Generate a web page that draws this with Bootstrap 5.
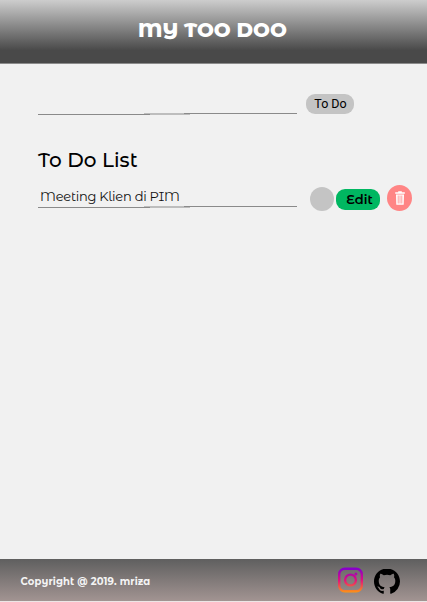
<!DOCTYPE html>
<html lang="en">
<head>
<meta charset="utf-8">
<meta name="viewport" content="width=device-width, initial-scale=1">
<title>My Too Doo</title>
<link rel="stylesheet" href="https://cdn.jsdelivr.net/npm/bootstrap@5.3.0/dist/css/bootstrap.min.css">
<style>
body{background:#f1f1f1;color:#000;font-family:"Montserrat Alternates",Montserrat,Inter,sans-serif;overflow:hidden}
.top-bar{height:64px;background:linear-gradient(#cdcdcd 0,#494949 80%,#494949 100%);border-bottom:1px solid #8b8b8b;padding:0 2px 3px 0}
.top-bar h1{font-size:20px;line-height:24px;font-weight:800}
.field{width:259px;margin-left:38px}
.field input,.field .task{display:block;width:100%;height:20px;padding:0 2px;font-size:13px;line-height:20px;background:none;border:0;outline:0}
.add-row .field{margin-top:-1px}
.field .task{font-weight:400;letter-spacing:-.25px;color:#111}
.field svg{display:block}
.add-row{height:20px;margin-top:30px}
.add-row .btn{width:48px;height:20px;margin-left:9px;background:#c4c4c4;border-radius:9px;font:12.5px/18px Roboto,sans-serif;color:#000;padding:0 0 1px 1px!important}
.list-title{font-size:20px;line-height:24px;margin:34px 0 0 38px;letter-spacing:.07px;font-weight:500}
.task-row{height:26px;margin-top:13px}
.task-row .field{margin-top:-2px}
.check{width:24px;height:24px;background:#c4c4c4;margin:2px 0 0 12.5px}
.task-row .edit{width:44px;height:21px;margin:3px 0 0 2.5px;background:#00b761;border-radius:9px;font-size:13px;line-height:21px;font-weight:600;color:#000;padding:0 0 0 3px!important}
.trash{width:25px;height:26px;margin-left:7px;background:#ff8585}
.foot{height:42px;background:linear-gradient(#5f5f5f,#a29492);padding:0 26px 0 20.5px;color:#f4f4f4}
.foot p{font-size:10px;font-weight:700;line-height:14px;letter-spacing:.12px;padding-top:4px}
.foot-line{height:1px;background:#ece6e6}
</style>
<script src="https://cdn.jsdelivr.net/npm/bootstrap@5.3.0/dist/js/bootstrap.bundle.min.js"></script>
</head>
<body class="d-flex flex-column vh-100">
<header class="top-bar d-flex align-items-center justify-content-center flex-shrink-0">
  <h1 class="m-0 text-white">MY TOO DOO</h1>
</header>
<main class="flex-grow-1">
  <form class="add-row d-flex align-items-start">
    <div class="field flex-shrink-0"><input type="text" aria-label="New task">
      <svg width="259" height="2"><path d="M0 1h112v1H0zM146 0h113v1H146z" fill="#8a8a8a"/><path d="M112 1h40v1h-40zM106 0h40v1h-40z" fill="#8a8a8a" opacity=".5"/></svg></div>
    <button type="button" class="btn border-0 p-0">To Do</button>
  </form>
  <h2 class="list-title">To Do List</h2>
  <div class="task-row d-flex align-items-center">
    <div class="field flex-shrink-0"><div class="task">Meeting Klien di PIM</div>
      <svg width="259" height="2"><path d="M0 1h112v1H0zM146 0h113v1H146z" fill="#8a8a8a"/><path d="M112 1h40v1h-40zM106 0h40v1h-40z" fill="#8a8a8a" opacity=".5"/></svg></div>
    <span class="check rounded-circle flex-shrink-0"></span>
    <button type="button" class="edit btn border-0 p-0">Edit</button>
    <button type="button" class="trash btn rounded-circle border-0 p-0 d-flex align-items-center justify-content-center" aria-label="Delete">
      <svg width="10" height="14" viewBox="0 0 10 14"><path d="M.2 1.2h3V.3h3.6v.9h3v1.5H.2zM1 3.4h8l-.3 10.4H1.3z" fill="#fff"/><path d="M3.2 4.5v8M5 4.5v8M6.8 4.5v8" stroke="#ff8585" stroke-width=".8"/></svg>
    </button>
  </div>
</main>
<footer class="foot d-flex align-items-center flex-shrink-0">
  <p class="m-0 me-auto">Copyright @ 2019. mriza</p>
  <svg width="26" height="26" viewBox="0 0 26 26" fill="none" stroke="url(#ig)" role="img" aria-label="Instagram">
    <defs><linearGradient id="ig" gradientUnits="userSpaceOnUse" x1="13" y1="0" x2="13" y2="26"><stop offset=".1" stop-color="#8a00c8"/><stop offset=".5" stop-color="#e0107f"/><stop offset="1" stop-color="#ff9a10"/></linearGradient></defs>
    <rect x="1.2" y="1.7" width="22.6" height="22.6" rx="5.5" stroke-width="2.4"/><circle cx="12.5" cy="13" r="5.4" stroke-width="2.3"/><circle cx="17.9" cy="7.1" r="1.5" fill="url(#ig)" stroke="none"/>
  </svg>
  <svg class="ms-2 mt-1" width="29" height="26" viewBox="-1.2 .3 17.8 16" role="img" aria-label="GitHub"><path d="M8 0C3.58 0 0 3.58 0 8c0 3.54 2.29 6.53 5.47 7.59.4.07.55-.17.55-.38 0-.19-.01-.82-.01-1.49-2.01.37-2.53-.49-2.69-.94-.09-.23-.48-.94-.82-1.13-.28-.15-.68-.52-.01-.53.63-.01 1.08.58 1.23.82.72 1.21 1.87.87 2.33.66.07-.52.28-.87.51-1.07-1.78-.2-3.64-.89-3.64-3.95 0-.87.31-1.59.82-2.15-.08-.2-.36-1.02.08-2.12 0 0 .67-.21 2.2.82a7.7 7.7 0 0 1 4 0c1.53-1.04 2.2-.82 2.2-.82.44 1.1.16 1.92.08 2.12.51.56.82 1.27.82 2.15 0 3.07-1.87 3.75-3.65 3.95.29.25.54.73.54 1.48 0 1.07-.01 1.93-.01 2.2 0 .21.15.46.55.38A8 8 0 0 0 16 8c0-4.42-3.58-8-8-8z" overflow="visible"/></svg>
</footer>
<div class="foot-line flex-shrink-0"></div>
</body>
</html>
